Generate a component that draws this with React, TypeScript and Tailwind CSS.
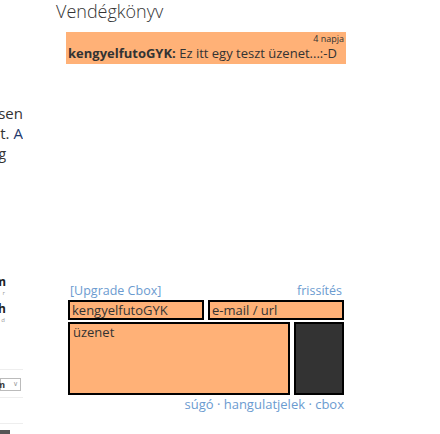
import React from "react";

const font = { fontFamily: '"Open Sans", "Noto Sans", sans-serif' };

function SideClip() {
  // left sidebar that is cut off by the window edge
  return (
    <div className="w-[23px] shrink-0 overflow-hidden text-[#333]">
      <div className="h-[103px]" />
      <div className="flex justify-end whitespace-nowrap text-[15px] leading-[20px]">egyébként megtekinthesen</div>
      <div className="flex justify-end whitespace-nowrap text-[15px] leading-[20px]">
        látható lent. <span className="ml-[4px] text-[#1f3a6e]">A</span>
      </div>
      <div className="mt-[2px] flex justify-end whitespace-nowrap pr-[17px] text-[14px] leading-[18px]">mindig</div>
      <div className="h-[112px]" />
      <div className="flex justify-end whitespace-nowrap pr-[17px] text-[12px] font-bold leading-[14px] text-[#222]">Fórum</div>
      <div className="flex justify-end whitespace-nowrap pr-[18px] text-[6px] leading-[8px] text-[#999]">r</div>
      <div className="h-[5px]" />
      <div className="flex justify-end whitespace-nowrap pr-[17px] text-[12px] font-bold leading-[14px] text-[#222]">km/h</div>
      <div className="flex justify-end whitespace-nowrap pr-[18px] text-[6px] leading-[8px] text-[#999]">d</div>
      <div className="h-[45px]" />
      <div className="h-px bg-[#eee]" />
      <div className="h-[8px]" />
      <div className="flex h-[13px] w-[21px] items-center justify-end border border-[#bbb] pr-[2px] text-[9px] text-[#333]">
        <span className="mr-[8px] font-bold">m</span>
        <span className="text-[7px] text-[#999]">∨</span>
      </div>
      <div className="h-[6px]" />
      <div className="h-px bg-[#eee]" />
      <div className="h-[25px]" />
      <div className="h-px bg-[#eee]" />
      <div className="mt-[6px] flex items-end gap-[2px]">
        <div className="h-[6px] w-[10px] bg-[#555]" />
        <div className="h-[2px] w-[2px] bg-[#f0a060]" />
      </div>
    </div>
  );
}

export default function App() {
  return (
    <div className="flex h-[434px] w-[440px] overflow-hidden bg-white" style={font}>
      <SideClip />
      <main className="ml-[33px] w-[290px] shrink-0">
        {/* Title */}
        <h1 className="text-[18px] font-light leading-[22px] text-[#333]">Vendégkönyv</h1>

        {/* Latest message */}
        <div className="ml-[10px] mt-[10px] h-[32px] w-[280px] bg-[#ffb177] px-[2px] pt-[1px] text-[#333]">
          <div className="text-right text-[9px] leading-[12px]">4 napja</div>
          <div className="whitespace-nowrap text-[13px] leading-[17px]">
            <span className="font-bold">kengyelfutoGYK:</span> Ez itt egy teszt üzenet...:-D
          </div>
        </div>

        {/* Post form */}
        <div className="ml-[12px] mt-[219px] w-[276px] text-[#6b9bd0]">
          <div className="flex justify-between px-[2px] text-[12.5px] leading-[16px]">
            <span>[Upgrade Cbox]</span>
            <span>frissítés</span>
          </div>
          <div className="mt-[1px] flex gap-[4px]">
            <div className="h-[20px] w-[136px] border-2 border-black bg-[#ffb177] px-[2px] text-[13px] leading-[16px] text-[#333]">kengyelfutoGYK</div>
            <div className="h-[20px] flex-1 border-2 border-black bg-[#ffb177] px-[2px] text-[13px] leading-[16px] text-[#333]">e-mail / url</div>
          </div>
          <div className="mt-[2px] flex gap-[4px]">
            <div className="h-[73px] w-[222px] border-2 border-black bg-[#ffb177] px-[3px] text-[13px] leading-[17px] text-[#333]">üzenet</div>
            <div className="h-[73px] flex-1 border-2 border-black bg-[#333]" />
          </div>
          <div className="mt-[1px] text-right text-[13px] leading-[17px]">
            súgó · hangulatjelek · cbox
          </div>
        </div>
      </main>
    </div>
  );
}
